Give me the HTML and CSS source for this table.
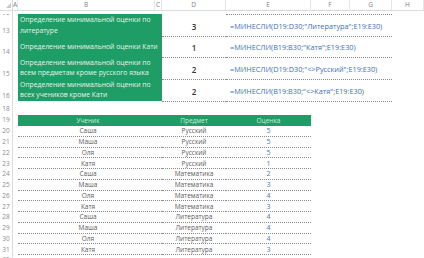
FILE: index.html
```html
<!DOCTYPE html>
<html lang="ru">
<head>
<meta charset="utf-8">
<title>МИНЕСЛИ</title>
<link rel="stylesheet" href="styles.css">
</head>
<body>
<div class="sheet">
  <div class="row hdr">
    <div class="corner"><svg width="13" height="10" viewBox="0 0 13 10"><polygon points="11,3 11,8 6,8" fill="#c8c8c8"/></svg></div>
    <div class="colh">A</div>
    <div class="colh">B</div>
    <div class="colh">C</div>
    <div class="colh">D</div>
    <div class="colh">E</div>
    <div class="colh">F</div>
    <div class="colh">G</div>
    <div class="colh">H</div>
  </div>
  <div class="row r12">
    <div class="rn cut"><span>12</span></div>
    <div></div>
    <div class="cell sp2"></div>
    <div class="cell d"></div>
    <div class="cell eg top"></div>
  </div>
  <div class="row tall first">
    <div class="rn">13</div>
    <div></div>
    <div class="task sp2">Определение минимальной оценки по<br>литературе</div>
    <div class="val d dot">3</div>
    <div class="formula eg dot">=МИНЕСЛИ(D19:D30;"Литература";E19:E30)</div>
  </div>
  <div class="row tall">
    <div class="rn">14</div>
    <div></div>
    <div class="task sp2 low">Определение минимальной оценки Кати</div>
    <div class="val d dot">1</div>
    <div class="formula eg dot">=МИНЕСЛИ(B19:B30;"Катя";E19:E30)</div>
  </div>
  <div class="row tall">
    <div class="rn">15</div>
    <div></div>
    <div class="task sp2">Определение минимальной оценки по<br>всем предметам кроме русского языка</div>
    <div class="val d dot">2</div>
    <div class="formula eg dot">=МИНЕСЛИ(D19:D30;"&lt;&gt;Русский";E19:E30)</div>
  </div>
  <div class="row tall">
    <div class="rn">16</div>
    <div></div>
    <div class="task sp2">Определение минимальной оценки по<br>всех учеников кроме Кати</div>
    <div class="val d dot">2</div>
    <div class="formula eg dot">=МИНЕСЛИ(B19:B30;"&lt;&gt;Катя";E19:E30)</div>
  </div>
  <div class="row r18">
    <div class="rn">18</div>
  </div>
  <div class="row r19">
    <div class="rn">19</div>
    <div></div>
    <div class="th sp2 name">Ученик</div>
    <div class="th">Предмет</div>
    <div class="th">Оценка</div>
  </div>
  <div class="row data"><div class="rn">20</div><div></div><div class="c sp2 name">Саша</div><div class="c">Русский</div><div class="c score">5</div></div>
  <div class="row data"><div class="rn">21</div><div></div><div class="c sp2 name">Маша</div><div class="c">Русский</div><div class="c score">5</div></div>
  <div class="row data"><div class="rn">22</div><div></div><div class="c sp2 name">Оля</div><div class="c">Русский</div><div class="c score">5</div></div>
  <div class="row data"><div class="rn">23</div><div></div><div class="c sp2 name">Катя</div><div class="c">Русский</div><div class="c score">1</div></div>
  <div class="row data"><div class="rn">24</div><div></div><div class="c sp2 name">Саша</div><div class="c">Математика</div><div class="c score">2</div></div>
  <div class="row data"><div class="rn">25</div><div></div><div class="c sp2 name">Маша</div><div class="c">Математика</div><div class="c score">3</div></div>
  <div class="row data"><div class="rn">26</div><div></div><div class="c sp2 name">Оля</div><div class="c">Математика</div><div class="c score">4</div></div>
  <div class="row data"><div class="rn">27</div><div></div><div class="c sp2 name">Катя</div><div class="c">Математика</div><div class="c score">3</div></div>
  <div class="row data"><div class="rn">28</div><div></div><div class="c sp2 name">Саша</div><div class="c">Литература</div><div class="c score">4</div></div>
  <div class="row data"><div class="rn">29</div><div></div><div class="c sp2 name">Маша</div><div class="c">Литература</div><div class="c score">4</div></div>
  <div class="row data"><div class="rn">30</div><div></div><div class="c sp2 name">Оля</div><div class="c">Литература</div><div class="c score">4</div></div>
  <div class="row data"><div class="rn">31</div><div></div><div class="c sp2 name">Катя</div><div class="c">Литература</div><div class="c score">3</div></div>
  <div class="row data"><div class="rn">32</div></div>
</div>
</body>
</html>
```

FILE: styles.css
```css
* { box-sizing: border-box; }
html, body { margin: 0; padding: 0; background: #ffffff; }
body { font-family: "Open Sans", "Liberation Sans", sans-serif; }

.sheet {
  width: 424px;
  height: 258px;
  overflow: hidden;
  display: flex;
  flex-direction: column;
}

.row {
  display: grid;
  grid-template-columns: 13px 5px 137px 7px 64px 85px 39px 42px 32px;
  flex: none;
}

.sp2 { grid-column: span 2; }
.eg { grid-column: span 3; }

/* column header */
.hdr { height: 11px; border-bottom: 1px solid #dcdcdc; }
.corner { border-right: 1px solid #dcdcdc; line-height: 0; }
.colh {
  font-size: 6.5px;
  line-height: 10px;
  color: #7f7f7f;
  text-align: center;
  border-right: 1px solid #e6e6e6;
}

/* row numbers */
.rn {
  border-right: 1px solid #dcdcdc;
  font-size: 6.5px;
  color: #8c8c8c;
  display: flex;
  align-items: center;
  justify-content: center;
  line-height: 8px;
}
.tall .rn { align-items: flex-end; padding-bottom: 2px; }
.rn.cut { align-items: flex-end; overflow: hidden; }
.rn.cut span { display: block; margin-bottom: -6px; }

.r12 { height: 4px; }
.r12 .top { border-bottom: 1px dotted #8a8a8a; align-self: end; height: 1px; }

.tall { height: 22px; }
.tall.first { height: 21px; }

.dot { border-bottom: 1px dotted #8a8a8a; }

.task {
  background: #1f9d67;
  color: #e3f4ea;
  font-size: 6.8px;
  line-height: 10.5px;
  padding-left: 2px;
  display: flex;
  align-items: center;
  margin: -1px 0 1px;
  white-space: nowrap;
}
.first .task { align-items: flex-start; padding-top: 1px; }
.task.low { padding-top: 3px; }

.val {
  font-size: 8px;
  font-weight: 600;
  color: #333333;
  display: flex;
  align-items: center;
  justify-content: center;
  padding-top: 1px;
}
.formula {
  font-size: 7.3px;
  color: #3d6fb3;
  white-space: nowrap;
  display: flex;
  align-items: center;
  padding-left: 4px;
  padding-top: 1px;
}

.r18 { height: 12px; }
.r18 .rn { align-items: flex-end; padding-bottom: 1px; }
.r19 { height: 12px; }
.th {
  background: #1f9d67;
  color: #cdebd9;
  font-size: 6.5px;
  display: flex;
  align-items: center;
  justify-content: center;
  margin-top: 1px;
}

.data { height: 10.75px; }
.c {
  border-bottom: 1px dotted #8a8a8a;
  font-size: 6.5px;
  color: #5a5a5a;
  display: flex;
  align-items: center;
  justify-content: center;
  white-space: nowrap;
}
.name { padding-right: 4px; }
.score { color: #4a78b8; font-size: 7px; }
```
